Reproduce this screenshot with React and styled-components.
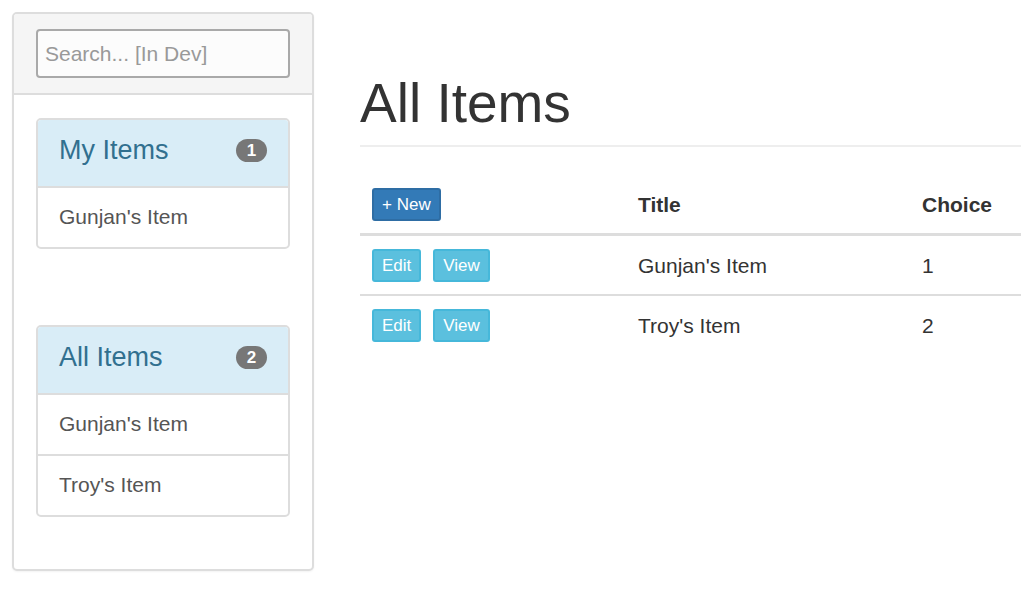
import React from 'react'
import styled, { createGlobalStyle } from 'styled-components'

const GlobalStyle = createGlobalStyle`
  html, body {
    margin: 0;
    padding: 0;
    background: #fff;
  }
  body {
    font-family: "Liberation Sans", Arial, sans-serif;
    color: #333;
    overflow: hidden;
  }
`

const Page = styled.div`
  display: flex;
  align-items: flex-start;
  gap: 46px;
  padding: 12px 0 12px 12px;
  width: 1021px;
  box-sizing: border-box;
`

const Sidebar = styled.aside`
  width: 302px;
  flex-shrink: 0;
  box-sizing: border-box;
  border: 2px solid #ddd;
  border-radius: 5px;
  background: #fff;
  box-shadow: 0 1px 2px rgba(0, 0, 0, 0.05);
  overflow: hidden;
`

const SidebarHead = styled.div`
  background: #f5f5f5;
  border-bottom: 2px solid #ddd;
  padding: 15px 22px 15px 22px;
`

const Search = styled.input`
  display: block;
  width: 100%;
  height: 49px;
  box-sizing: border-box;
  border: 2px solid #a9a9a9;
  border-radius: 4px;
  background: #fcfcfc;
  padding: 0 7px;
  font: 21px "Liberation Sans", Arial, sans-serif;
  color: #555;
  outline: none;

  &::placeholder {
    color: #999;
  }
`

const SidebarBody = styled.div`
  display: flex;
  flex-direction: column;
  gap: 76px;
  padding: 23px 22px 52px 22px;
`

const ListPanel = styled.div`
  border: 2px solid #ddd;
  border-radius: 5px;
  overflow: hidden;
  background: #fff;
`

const ListHead = styled.div`
  display: flex;
  align-items: center;
  justify-content: space-between;
  box-sizing: border-box;
  background: #d9edf7;
  color: #31708f;
  padding: 0 21px 5px 21px;
  height: 66px;
  font-size: 27px;
`

const Badge = styled.span`
  display: inline-flex;
  align-items: center;
  justify-content: center;
  min-width: 31px;
  height: 23px;
  padding: 0 9px;
  box-sizing: border-box;
  border-radius: 12px;
  background: #777;
  color: #fff;
  font-size: 17px;
  font-weight: bold;
`

const ListItem = styled.div`
  border-top: 2px solid #ddd;
  padding: 15px 21px 16px 21px;
  line-height: 28px;
  font-size: 21px;
  color: #555;
`

const Main = styled.main`
  flex: 1;
  min-width: 0;
`

const Title = styled.h1`
  margin: 62px 0 29px 0;
  padding-bottom: 13px;
  border-bottom: 2px solid #eee;
  font-size: 55px;
  font-weight: normal;
  line-height: 58px;
  color: #333;
`

const Table = styled.table`
  width: 100%;
  table-layout: fixed;
  border-collapse: collapse;
  font-size: 21px;
  color: #333;
`

const HeadCell = styled.th`
  box-sizing: border-box;
  text-align: left;
  font-weight: bold;
  padding: 12px 12px;
  border-bottom: 3px solid #ddd;
  width: ${p => p.$w || 'auto'};
  vertical-align: middle;
  white-space: nowrap;
`

const Cell = styled.td`
  box-sizing: border-box;
  padding: 13px 12px 12px 12px;
  border-top: ${p => (p.$first ? 'none' : '2px solid #ddd')};
  vertical-align: middle;
  line-height: 28px;
  white-space: nowrap;
`

const Btn = styled.button`
  height: 33px;
  padding: 0 8px;
  margin-right: 12px;
  border-radius: 3px;
  font: 17px "Liberation Sans", Arial, sans-serif;
  color: #fff;
  cursor: pointer;
  vertical-align: middle;
  background: ${p => (p.$kind === 'primary' ? '#337ab7' : '#5bc0de')};
  border: 2px solid ${p => (p.$kind === 'primary' ? '#2e6da4' : '#46b8da')};
`

const mine = ["Gunjan's Item"]
const all = [
  { title: "Gunjan's Item", choice: 1 },
  { title: "Troy's Item", choice: 2 },
]

export default function App() {
  return (
    <>
      <GlobalStyle />
      <Page>
        <Sidebar>
          <SidebarHead>
            <Search placeholder="Search... [In Dev]" />
          </SidebarHead>
          <SidebarBody>
            <ListPanel>
              <ListHead>
                My Items <Badge>{mine.length}</Badge>
              </ListHead>
              {mine.map(t => (
                <ListItem key={t}>{t}</ListItem>
              ))}
            </ListPanel>
            <ListPanel>
              <ListHead>
                All Items <Badge>{all.length}</Badge>
              </ListHead>
              {all.map(it => (
                <ListItem key={it.title}>{it.title}</ListItem>
              ))}
            </ListPanel>
          </SidebarBody>
        </Sidebar>
        <Main>
          <Title>All Items</Title>
          <Table>
            <thead>
              <tr>
                <HeadCell $w="266px">
                  <Btn $kind="primary">+ New</Btn>
                </HeadCell>
                <HeadCell $w="284px">Title</HeadCell>
                <HeadCell>Choice</HeadCell>
              </tr>
            </thead>
            <tbody>
              {all.map((it, i) => (
                <tr key={it.title}>
                  <Cell $first={i === 0}>
                    <Btn>Edit</Btn>
                    <Btn>View</Btn>
                  </Cell>
                  <Cell $first={i === 0}>{it.title}</Cell>
                  <Cell $first={i === 0}>{it.choice}</Cell>
                </tr>
              ))}
            </tbody>
          </Table>
        </Main>
      </Page>
    </>
  )
}
